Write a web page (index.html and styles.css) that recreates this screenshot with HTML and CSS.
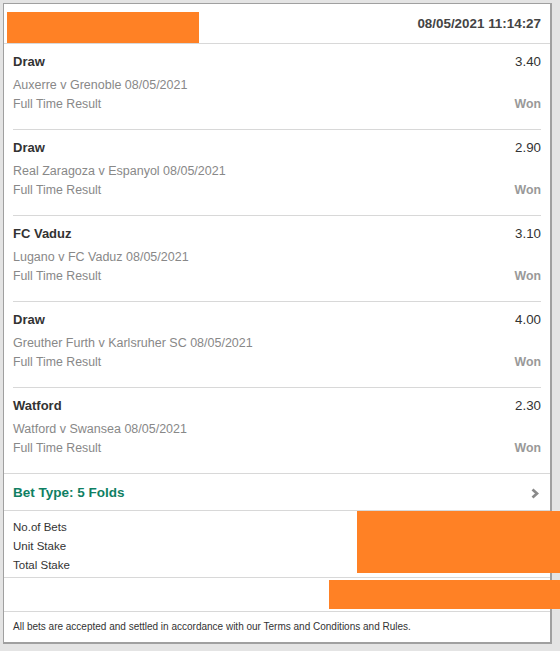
FILE: index.html
```html
<!DOCTYPE html>
<html lang="en">
 <head>
  <meta charset="utf-8"/>
  <title>Bet receipt</title>
  <link rel="stylesheet" href="styles.css">
 </head>
 <body>
	<div class="receipt">
		<div class="head">
			<span class="head-date">08/05/2021 11:14:27</span>
		</div>

		<div class="sel">
			<div class="sel-row"><span class="sel-name">Draw</span><span class="sel-odds">3.40</span></div>
			<div class="sel-event">Auxerre v Grenoble 08/05/2021</div>
			<div class="sel-row sel-market"><span>Full Time Result</span><span class="sel-result">Won</span></div>
		</div>
		<div class="sel">
			<div class="sel-row"><span class="sel-name">Draw</span><span class="sel-odds">2.90</span></div>
			<div class="sel-event">Real Zaragoza v Espanyol 08/05/2021</div>
			<div class="sel-row sel-market"><span>Full Time Result</span><span class="sel-result">Won</span></div>
		</div>
		<div class="sel">
			<div class="sel-row"><span class="sel-name">FC Vaduz</span><span class="sel-odds">3.10</span></div>
			<div class="sel-event">Lugano v FC Vaduz 08/05/2021</div>
			<div class="sel-row sel-market"><span>Full Time Result</span><span class="sel-result">Won</span></div>
		</div>
		<div class="sel">
			<div class="sel-row"><span class="sel-name">Draw</span><span class="sel-odds">4.00</span></div>
			<div class="sel-event">Greuther Furth v Karlsruher SC 08/05/2021</div>
			<div class="sel-row sel-market"><span>Full Time Result</span><span class="sel-result">Won</span></div>
		</div>
		<div class="sel">
			<div class="sel-row"><span class="sel-name">Watford</span><span class="sel-odds">2.30</span></div>
			<div class="sel-event">Watford v Swansea 08/05/2021</div>
			<div class="sel-row sel-market"><span>Full Time Result</span><span class="sel-result">Won</span></div>
		</div>

		<div class="bettype">
			<span>Bet Type: 5 Folds</span>
			<svg class="chev" width="8" height="11" viewBox="0 0 8 11"><polyline points="1.5,1.5 6,5.5 1.5,9.5" fill="none" stroke="#8a8a8a" stroke-width="2.8"/></svg>
		</div>

		<ul class="summary">
			<li>No.of Bets</li>
			<li>Unit Stake</li>
			<li>Total Stake</li>
		</ul>

		<div class="returns"></div>

		<p class="terms">All bets are accepted and settled in accordance with our Terms and Conditions and Rules.</p>
	</div>

	<!-- redacted areas -->
	<div class="mask mask-id"></div>
	<div class="mask mask-stake"></div>
	<div class="mask mask-return"></div>
 </body>
</html>
```

FILE: styles.css
```css
*{margin:0; padding:0; box-sizing:border-box;}
body{background-color:#e4e4e4; font-family:"Liberation Sans", Arial, sans-serif; color:#333; padding:3px 0 0 3px;}
li{list-style:none;}

.receipt{width:549px; height:641px; background-color:#fff; border:1px solid #a0a0a0; border-right-width:2px; border-bottom-width:2px;}

/* header */
.head{height:40px; border-bottom:1px solid #d8d8d8; display:flex; justify-content:flex-end; align-items:center; padding:0 9px 0 10px;}
	.head-date{font-size:13.4px; font-weight:bold; color:#444;}

/* selections */
.sel{margin:0 9px; padding:8px 0 16px; border-bottom:1px solid #d8d8d8;}
.sel:first-of-type{padding-bottom:15px;}
.sel:nth-child(6){margin:0; padding-left:9px; padding-right:9px;}
	.sel-row{display:flex; justify-content:space-between; align-items:center; height:18px;}
	.sel-name{font-size:13px; font-weight:bold; color:#333;}
	.sel-odds{font-size:13.3px; color:#333;}
	.sel-event{margin-top:6px; height:18px; line-height:18px; font-size:12.5px; color:#888;}
	.sel-market{margin-top:1px; font-size:12.3px; color:#888;}
	.sel-result{font-weight:bold; color:#999;}

/* bet type */
.bettype{height:37px; border-bottom:1px solid #d8d8d8; display:flex; justify-content:space-between; align-items:center; padding:0 11px 0 9px; font-size:13.5px; font-weight:bold; color:#0f7f63;}
	.chev{margin-top:2px;}

.summary{padding:7px 9px 3px; border-bottom:1px solid #d8d8d8; height:67px;}
	.summary li{height:19px; line-height:19px; font-size:11.5px; color:#333;}

.returns{height:34px; border-bottom:1px solid #d8d8d8;}

.terms{height:30px; line-height:30px; padding-left:9px; font-size:10px; color:#333;}

/* orange redaction boxes laid over the receipt */
.mask{position:absolute; background-color:#ff8125;}
.mask-id{left:7px; top:12px; width:192px; height:31px;}
.mask-stake{left:357px; top:511px; width:203px; height:62px;}
.mask-return{left:329px; top:580px; width:231px; height:29px;}
```
